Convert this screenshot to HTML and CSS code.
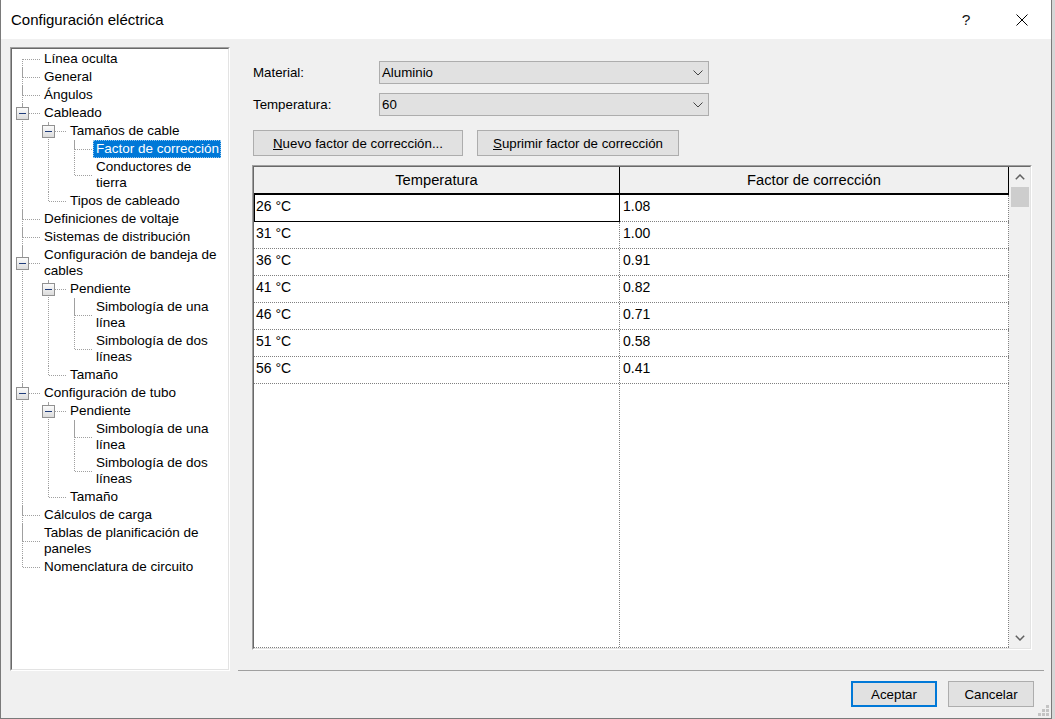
FILE: index.html
```html
<!DOCTYPE html>
<html lang="es">
<head>
<meta charset="utf-8">
<title>Configuración eléctrica</title>
<link rel="stylesheet" href="styles.css">
</head>
<body>
<div class="dialog">
  <div class="titlebar">
    <span class="title">Configuración eléctrica</span>
    <span class="help">?</span>
    <span class="close">
      <svg width="12" height="12" viewBox="0 0 12 12"><path d="M0.5 0.5 L11.5 11.5 M11.5 0.5 L0.5 11.5" stroke="#000" stroke-width="1" fill="none"/></svg>
    </span>
  </div>
  <div class="body">
    <div class="main">
      <div class="tree-panel">
        <div class="tree-inner">
          <ul class="tree">
            <li><div class="row"><span class="label">Línea oculta</span></div></li>
            <li><div class="row"><span class="label">General</span></div></li>
            <li><div class="row"><span class="label">Ángulos</span></div></li>
            <li><div class="row"><span class="toggle"></span><span class="label">Cableado</span></div>
              <ul>
                <li><div class="row"><span class="toggle"></span><span class="label">Tamaños de cable</span></div>
                  <ul>
                    <li><div class="row"><span class="label selected">Factor de corrección</span></div></li>
                    <li><div class="row"><span class="label">Conductores de tierra</span></div></li>
                  </ul>
                </li>
                <li><div class="row"><span class="label">Tipos de cableado</span></div></li>
              </ul>
            </li>
            <li><div class="row"><span class="label">Definiciones de voltaje</span></div></li>
            <li><div class="row"><span class="label">Sistemas de distribución</span></div></li>
            <li><div class="row"><span class="toggle"></span><span class="label">Configuración de bandeja de cables</span></div>
              <ul>
                <li><div class="row"><span class="toggle"></span><span class="label">Pendiente</span></div>
                  <ul>
                    <li><div class="row"><span class="label">Simbología de una línea</span></div></li>
                    <li><div class="row"><span class="label">Simbología de dos líneas</span></div></li>
                  </ul>
                </li>
                <li><div class="row"><span class="label">Tamaño</span></div></li>
              </ul>
            </li>
            <li><div class="row"><span class="toggle"></span><span class="label">Configuración de tubo</span></div>
              <ul>
                <li><div class="row"><span class="toggle"></span><span class="label">Pendiente</span></div>
                  <ul>
                    <li><div class="row"><span class="label">Simbología de una línea</span></div></li>
                    <li><div class="row"><span class="label">Simbología de dos líneas</span></div></li>
                  </ul>
                </li>
                <li><div class="row"><span class="label">Tamaño</span></div></li>
              </ul>
            </li>
            <li><div class="row"><span class="label">Cálculos de carga</span></div></li>
            <li><div class="row"><span class="label">Tablas de planificación de paneles</span></div></li>
            <li><div class="row"><span class="label">Nomenclatura de circuito</span></div></li>
          </ul>
        </div>
      </div>

      <div class="right">
        <div class="field">
          <label class="field-label">Material:</label>
          <div class="select"><span>Aluminio</span>
            <svg class="chev" width="10" height="6" viewBox="0 0 10 6"><polyline points="0.5,0.5 5,5 9.5,0.5" fill="none" stroke="#444" stroke-width="1"/></svg>
          </div>
        </div>
        <div class="field">
          <label class="field-label">Temperatura:</label>
          <div class="select"><span>60</span>
            <svg class="chev" width="10" height="6" viewBox="0 0 10 6"><polyline points="0.5,0.5 5,5 9.5,0.5" fill="none" stroke="#444" stroke-width="1"/></svg>
          </div>
        </div>
        <div class="actions">
          <button class="btn btn-new"><u>N</u>uevo factor de corrección...</button>
          <button class="btn btn-del"><u>S</u>uprimir factor de corrección</button>
        </div>

        <div class="grid">
          <div class="grid-inner">
            <div class="grid-main">
              <div class="ghead">
                <div class="hcell c1">Temperatura</div>
                <div class="hcell c2">Factor de corrección</div>
              </div>
              <div class="grow"><div class="cell c1 sel">26 °C</div><div class="cell c2">1.08</div></div>
              <div class="grow"><div class="cell c1">31 °C</div><div class="cell c2">1.00</div></div>
              <div class="grow"><div class="cell c1">36 °C</div><div class="cell c2">0.91</div></div>
              <div class="grow"><div class="cell c1">41 °C</div><div class="cell c2">0.82</div></div>
              <div class="grow"><div class="cell c1">46 °C</div><div class="cell c2">0.71</div></div>
              <div class="grow"><div class="cell c1">51 °C</div><div class="cell c2">0.58</div></div>
              <div class="grow"><div class="cell c1">56 °C</div><div class="cell c2">0.41</div></div>
              <div class="gfill"><div class="fcol c1"></div><div class="fcol c2"></div></div>
            </div>
            <div class="vscroll">
              <div class="sarrow">
                <svg width="10" height="6" viewBox="0 0 10 6"><polyline points="0.8,5.2 5,1 9.2,5.2" fill="none" stroke="#606060" stroke-width="1.5"/></svg>
              </div>
              <div class="thumb"></div>
              <div class="strack"></div>
              <div class="sarrow">
                <svg width="10" height="6" viewBox="0 0 10 6"><polyline points="0.8,0.8 5,5 9.2,0.8" fill="none" stroke="#606060" stroke-width="1.5"/></svg>
              </div>
            </div>
          </div>
        </div>
      </div>
    </div>

    <div class="footer">
      <button class="btn btn-foot btn-default">Aceptar</button>
      <button class="btn btn-foot">Cancelar</button>
      <svg class="grip" width="11" height="11" viewBox="0 0 11 11">
        <rect x="8" y="0" width="3" height="3" fill="#c4c4c4"/>
        <rect x="4" y="4" width="3" height="3" fill="#c4c4c4"/>
        <rect x="8" y="4" width="3" height="3" fill="#c4c4c4"/>
        <rect x="0" y="8" width="3" height="3" fill="#c4c4c4"/>
        <rect x="4" y="8" width="3" height="3" fill="#c4c4c4"/>
        <rect x="8" y="8" width="3" height="3" fill="#c4c4c4"/>
      </svg>
    </div>
  </div>
</div>
</body>
</html>
```

FILE: styles.css
```css
* { box-sizing: border-box; }

html, body { margin: 0; padding: 0; }

body {
  width: 1055px;
  height: 719px;
  overflow: hidden;
  background: #d6d6d6;
  font-family: "Liberation Sans", Arial, sans-serif;
  font-size: 13.3px;
  color: #000;
}

.dialog {
  width: 1052px;
  height: 719px;
  border: 1px solid #7a7a7a;
  border-top: 0;
  background: #f0f0f0;
  display: flex;
  flex-direction: column;
}

/* Title bar */
.titlebar {
  height: 39px;
  flex: none;
  background: #fff;
  display: flex;
  align-items: center;
  padding-left: 10px;
}
.title { flex: 1; font-size: 15px; padding-bottom: 1px; }
.help { width: 40px; text-align: center; font-size: 15.5px; color: #111; }
.close {
  width: 46px;
  margin-left: 13px;
  margin-right: 6px;
  display: flex;
  justify-content: center;
  align-items: center;
}

.body { flex: 1; display: flex; flex-direction: column; }

.main { display: flex; padding: 8px 0 0 9px; }

/* Tree */
.tree-panel {
  width: 220px;
  height: 624px;
  background: #fff;
  border: 1px solid;
  border-color: #a0a0a0 #fff #fff #a0a0a0;
}
.tree-inner {
  height: 100%;
  border: 1px solid;
  border-color: #696969 #e3e3e3 #e3e3e3 #696969;
  padding: 1px 4px 0 0;
}

.tree, .tree ul { list-style: none; margin: 0; padding: 0; }
.tree ul { padding-left: 26px; }
.tree li { position: relative; }
.tree { font-size: 13.5px; }

.tree li::before {
  content: "";
  position: absolute;
  left: 10px;
  top: 0;
  bottom: 0;
  border-left: 1px dotted #a0a0a0;
}
.tree li:last-child::before { display: none; }
.tree > li:first-child::before { top: 9px; }

.row { position: relative; padding-left: 29px; }
.row::before {
  content: "";
  position: absolute;
  left: 11px;
  top: 50%;
  width: 17px;
  border-top: 1px dotted #a0a0a0;
}
.row::after {
  content: "";
  position: absolute;
  left: 10px;
  top: 0;
  height: 50%;
  border-left: 1px dotted #a0a0a0;
}
.tree > li:first-child > .row::after { display: none; }

.label {
  display: inline-block;
  padding: 1px 2px 1px 3px;
  line-height: 16px;
  position: relative;
}
.label.selected {
  background: #0078d7;
  color: #fff;
  outline: 1px dotted #8fc4ee;
  outline-offset: -1px;
}

.toggle {
  position: absolute;
  left: 4px;
  top: 50%;
  margin-top: -6px;
  width: 13px;
  height: 13px;
  border: 1px solid #919191;
  background: linear-gradient(#fbfbfb, #dcdcdc);
  z-index: 1;
}
.toggle::after {
  content: "";
  position: absolute;
  left: 2px;
  top: 5px;
  width: 7px;
  height: 1px;
  background: #1f3c7a;
}

/* Right side */
.right {
  width: 806px;
  height: 624px;
  margin-left: 8px;
  border-bottom: 1px solid #a0a0a0;
  padding: 14px 0 0 14px;
  display: flex;
  flex-direction: column;
}

.field { display: flex; align-items: center; height: 23px; }
.field + .field { margin-top: 9px; }
.field-label { width: 127px; padding-left: 1px; }

.select {
  width: 330px;
  height: 23px;
  border: 1px solid #adadad;
  background: #e1e1e1;
  display: flex;
  align-items: center;
  justify-content: space-between;
  padding: 0 5px 0 2px;
}

.actions { display: flex; gap: 14px; margin-top: 14px; padding-left: 1px; }

.btn {
  height: 26px;
  border: 1px solid #adadad;
  background: #e1e1e1;
  font: inherit;
  color: #000;
  display: flex;
  align-items: center;
  justify-content: center;
  padding: 0;
}
.btn-new { width: 210px; }
.btn-del { width: 202px; }

/* Grid */
.grid {
  margin-top: 9px;
  width: 780px;
  height: 485px;
  border: 1px solid;
  border-color: #a0a0a0 #fff #fff #a0a0a0;
}
.grid-inner {
  height: 100%;
  display: flex;
  border: 1px solid;
  border-color: #696969 #e3e3e3 #e3e3e3 #696969;
  background: #fff;
}
.grid-main { width: 755px; display: flex; flex-direction: column; }

.c1 { width: 366px; }
.c2 { width: 389px; }

.ghead {
  display: flex;
  height: 28px;
  flex: none;
  background: #f0f0f0;
  border-bottom: 2px solid #000;
}
.hcell {
  display: flex;
  align-items: center;
  justify-content: center;
  font-size: 14.7px;
  border-right: 1px solid #000;
  padding-bottom: 1px;
}

.grow {
  display: flex;
  height: 27px;
  flex: none;
  border-bottom: 1px dotted #808080;
}
.cell {
  font-size: 14px;
  line-height: 16px;
  padding: 3px 0 0 2px;
  border-right: 1px dotted #808080;
}
.cell.c2 { padding-left: 3px; }
.cell.sel {
  border: 1px solid #000;
  border-top: 0;
  padding-left: 1px;
  height: 27px;
  margin-bottom: -1px;
  position: relative;
}

.gfill { flex: 1; display: flex; border-bottom: 1px dotted #808080; }
.fcol { border-right: 1px dotted #808080; }

.vscroll {
  flex: 1;
  background: #f0f0f0;
  display: flex;
  flex-direction: column;
  align-items: center;
}
.sarrow {
  height: 20px;
  width: 100%;
  display: flex;
  align-items: center;
  justify-content: center;
}
.thumb { width: 18px; height: 20px; background: #cdcdcd; margin-left: 1px; }
.strack { flex: 1; }

/* Footer */
.footer {
  flex: 1;
  position: relative;
  display: flex;
  justify-content: flex-end;
  align-items: flex-start;
  gap: 11px;
  padding: 10px 17px 0 0;
}
.btn-foot { width: 86px; height: 26px; }
.btn-default { border: 2px solid #0078d7; }
.grip { position: absolute; right: 2px; bottom: 2px; }
```
